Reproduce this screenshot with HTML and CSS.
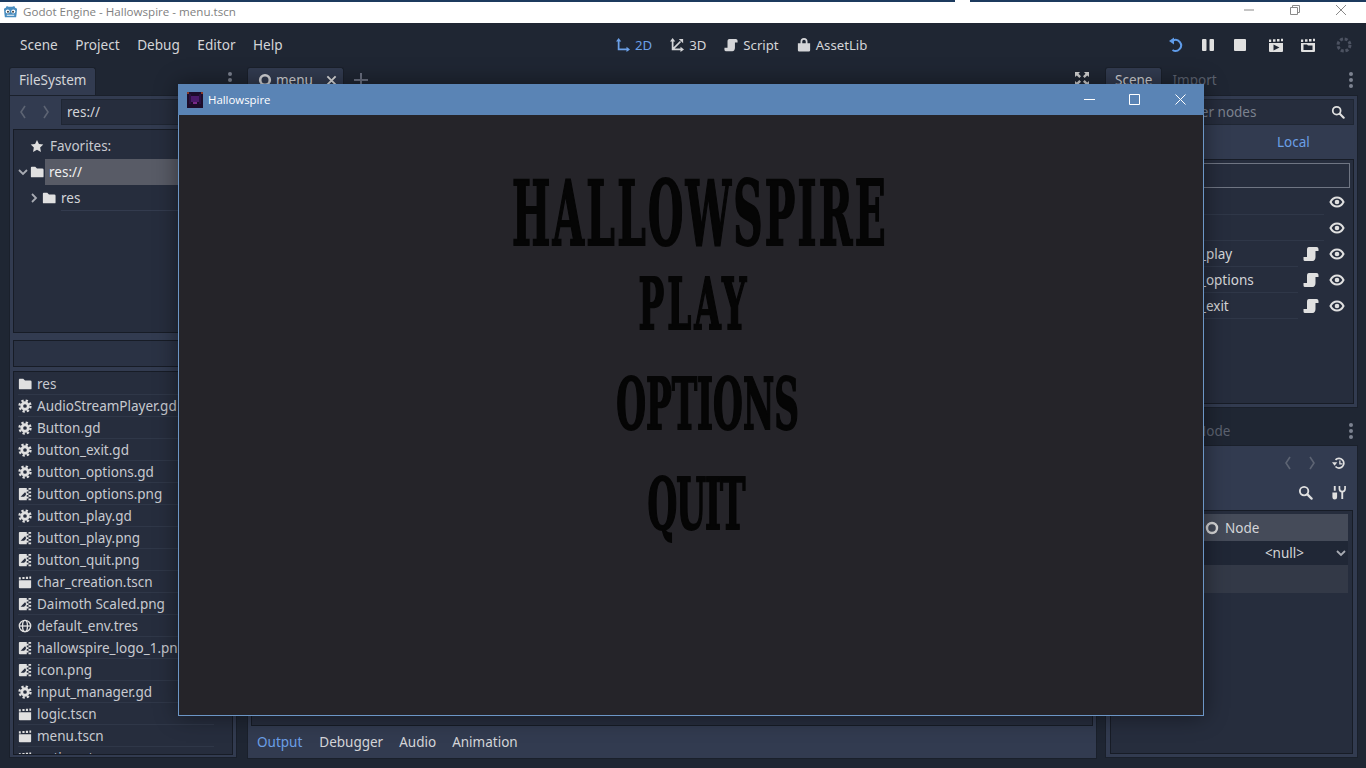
FILE: index.html
```html
<!DOCTYPE html>
<html lang="en">
  <head>
    <meta charset="UTF-8" />
    <title>Godot Engine - Hallowspire - menu.tscn</title>
    <link rel="stylesheet" href="styles.css">
  </head>
  <body>
    <svg class="defs" width="0" height="0">
      <symbol id="i-folder" viewBox="0 0 16 16"><path fill="currentColor" d="M2 2h4l2 2h6a1.500 1.500 0 0 1 1.500 1.500V13a1 1 0 0 1-1 1H2a1 1 0 0 1-1-1V3a1 1 0 0 1 1-1z"/></symbol>
      <symbol id="i-gear" viewBox="0 0 16 16"><circle cx="8" cy="8" r="3.700" fill="none" stroke="currentColor" stroke-width="3.200"/><circle cx="8" cy="8" r="6.300" fill="none" stroke="currentColor" stroke-width="2.600" stroke-dasharray="2.600 2.347"/></symbol>
      <symbol id="i-image" viewBox="0 0 16 16"><path fill="currentColor" d="M2 1h8v2h2v2h-2v2h2v2h-2v2h2v2h-2v2H2a1 1 0 0 1-1-1V2a1 1 0 0 1 1-1z"/><path fill="#262d3d" d="M3 11l5-5 1 1v2l-2 2z"/><path fill="currentColor" d="M12 1h3v2h-3zM12 5h3v2h-3zM12 9h3v2h-3zM12 13h3v2h-3z"/></symbol>
      <symbol id="i-scene" viewBox="0 0 16 16"><path fill="currentColor" d="M1 6h14v8a1 1 0 0 1-1 1H2a1 1 0 0 1-1-1z"/><path fill="currentColor" d="M1 2.500h2.200V5H1zM5 2.200h2.500v2.500H5zM9 2h2.500v2.500H9zM13 1.700h2v2.500h-2z"/></symbol>
      <symbol id="i-play-scene" viewBox="0 0 16 16"><use href="#i-scene"/><path fill="#1f2633" d="M5.500 7.500l6 3-6 3z"/></symbol>
      <symbol id="i-open-scene" viewBox="0 0 16 16"><use href="#i-scene"/><path fill="#1f2633" d="M3.500 7.500h3.500l1 1h4.500v4.500h-9z"/></symbol>
      <symbol id="i-globe" viewBox="0 0 16 16"><g fill="none" stroke="currentColor" stroke-width="1.500"><circle cx="8" cy="8" r="6.500"/><ellipse cx="8" cy="8" rx="2.800" ry="6.500"/><path d="M1.500 8h13"/></g></symbol>
      <symbol id="i-eye" viewBox="0 0 16 16"><path fill="none" stroke="currentColor" stroke-width="2" d="M1.500 8c1.500-3 3.700-4.500 6.500-4.500s5 1.500 6.500 4.500c-1.500 3-3.700 4.500-6.500 4.500S3 11 1.500 8z"/><circle cx="8" cy="8" r="2.300" fill="currentColor"/></symbol>
      <symbol id="i-script" viewBox="0 0 16 16"><path fill="currentColor" d="M6 1h7.500a2 2 0 0 1 2 2v2h-3v6c0 2-1 4-3 4H2a1.500 1.500 0 0 1-1.500-1.500V11H4V4c0-2 .5-3 2-3z"/></symbol>
      <symbol id="i-search" viewBox="0 0 16 16"><circle cx="6.500" cy="6.500" r="4.500" fill="none" stroke="currentColor" stroke-width="2"/><path d="M10 10l4.500 4.500" stroke="currentColor" stroke-width="2.400" stroke-linecap="round"/></symbol>
    </svg>

    <div class="screen-strip"><span class="strip-left"></span><span class="strip-gap"></span><span class="strip-right"></span></div>
    <header class="os-title">
      <svg class="godot-logo" viewBox="0 0 16 16"><path fill="#478cbf" d="M1 5l2-1 1-2 2 1h4l2-1 1 2 2 1-.5 5.500L14 14H2l-.5-3.500z"/><circle cx="5" cy="8" r="2.200" fill="#fff"/><circle cx="11" cy="8" r="2.200" fill="#fff"/><circle cx="5.300" cy="8.300" r="1.100" fill="#414042"/><circle cx="10.700" cy="8.300" r="1.100" fill="#414042"/><path d="M4 12h8" stroke="#fff" stroke-width="1"/></svg>
      <span class="os-title-text">Godot Engine - Hallowspire - menu.tscn</span>
      <div class="os-controls">
        <svg viewBox="0 0 10 10"><path d="M0 5h10" stroke="#8a8a8a"/></svg>
        <svg viewBox="0 0 10 10"><path fill="none" stroke="#8a8a8a" d="M.5 2.500h7v7h-7zM2.500 2.500v-2h7v7h-2"/></svg>
        <svg viewBox="0 0 10 10"><path stroke="#8a8a8a" d="M0 0l10 10M10 0L0 10"/></svg>
      </div>
    </header>

    <nav class="menubar">
      <div class="menu-left">
        <span>Scene</span><span>Project</span><span>Debug</span><span>Editor</span><span>Help</span>
      </div>
      <div class="menu-center">
        <span class="mode active"><svg viewBox="0 0 16 16"><path fill="none" stroke="currentColor" stroke-width="2" d="M3 3v10h11"/><path fill="currentColor" d="M3 0l3 4H0zM16 13l-4 3v-6z"/></svg>2D</span>
        <span class="mode"><svg viewBox="0 0 16 16"><path fill="none" stroke="currentColor" stroke-width="2" d="M3 3v10h10M3 13l9-9"/><path fill="currentColor" d="M3 0l3 4H0zM16 13l-4 3v-6zM15 1v5l-5-5z"/></svg>3D</span>
        <span class="mode"><svg viewBox="0 0 16 16"><use href="#i-script"/></svg>Script</span>
        <span class="mode"><svg viewBox="0 0 16 16"><path fill="currentColor" d="M1 6h14v8a1.500 1.500 0 0 1-1.500 1.500h-11A1.500 1.500 0 0 1 1 14z"/><path fill="none" stroke="currentColor" stroke-width="2" d="M5 7V4a3 3 0 0 1 6 0v3"/></svg>AssetLib</span>
      </div>
      <div class="menu-right">
        <svg class="blue" viewBox="0 0 16 16"><path fill="none" stroke="currentColor" stroke-width="2" d="M5 3.500A5.500 5.500 0 1 1 4.500 13"/><path fill="currentColor" d="M6 .5v7L1 4z"/></svg>
        <svg viewBox="0 0 16 16"><rect x="2" y="2" width="4.500" height="12" rx="1" fill="currentColor"/><rect x="9.500" y="2" width="4.500" height="12" rx="1" fill="currentColor"/></svg>
        <svg viewBox="0 0 16 16"><rect x="2" y="2" width="12" height="12" rx="1" fill="currentColor"/></svg>
        <svg viewBox="0 0 16 16"><use href="#i-play-scene"/></svg>
        <svg viewBox="0 0 16 16"><use href="#i-open-scene"/></svg>
        <svg class="dim" viewBox="0 0 16 16"><circle cx="8" cy="8" r="6" fill="none" stroke="currentColor" stroke-width="3" stroke-dasharray="3 1.710"/></svg>
      </div>
    </nav>

    <main class="docks">
      <section class="col-left">
        <div class="tabbar">
          <span class="tab active">FileSystem</span>
          <span class="dots"><i></i><i></i><i></i></span>
        </div>
        <div class="panel fs-panel">
          <div class="fs-nav">
            <svg class="chev dim-chev" viewBox="0 0 8 16"><path d="M6 2L2 8l4 6" /></svg>
            <svg class="chev dim-chev" viewBox="0 0 8 16"><path d="M2 2l4 6-4 6" /></svg>
            <div class="input path-input">res://</div>
          </div>
          <div class="box fs-tree">
            <div class="tree-row fav"><svg class="ico" viewBox="0 0 16 16"><path fill="currentColor" d="M8 1l2.200 4.600 5 .7-3.600 3.500.9 5L8 12.400l-4.500 2.400.9-5L.8 6.300l5-.7z"/></svg>Favorites:</div>
            <div class="tree-row res-root"><svg class="arrow" viewBox="0 0 10 10"><path d="M1 3l4 4 4-4"/></svg><svg class="ico" viewBox="0 0 16 16"><use href="#i-folder"/></svg><span class="selected">res://</span></div>
            <div class="tree-row res-child"><svg class="arrow" viewBox="0 0 10 10"><path d="M3 1l4 4-4 4"/></svg><svg class="ico" viewBox="0 0 16 16"><use href="#i-folder"/></svg><span class="child-name">res</span></div>
          </div>
          <div class="box fs-filter"></div>
          <div class="box fs-files">
            <div class="file"><svg class="ico" viewBox="0 0 16 16"><use href="#i-folder"/></svg>res</div>
            <div class="file"><svg class="ico" viewBox="0 0 16 16"><use href="#i-gear"/></svg>AudioStreamPlayer.gd</div>
            <div class="file"><svg class="ico" viewBox="0 0 16 16"><use href="#i-gear"/></svg>Button.gd</div>
            <div class="file"><svg class="ico" viewBox="0 0 16 16"><use href="#i-gear"/></svg>button_exit.gd</div>
            <div class="file"><svg class="ico" viewBox="0 0 16 16"><use href="#i-gear"/></svg>button_options.gd</div>
            <div class="file"><svg class="ico" viewBox="0 0 16 16"><use href="#i-image"/></svg>button_options.png</div>
            <div class="file"><svg class="ico" viewBox="0 0 16 16"><use href="#i-gear"/></svg>button_play.gd</div>
            <div class="file"><svg class="ico" viewBox="0 0 16 16"><use href="#i-image"/></svg>button_play.png</div>
            <div class="file"><svg class="ico" viewBox="0 0 16 16"><use href="#i-image"/></svg>button_quit.png</div>
            <div class="file"><svg class="ico" viewBox="0 0 16 16"><use href="#i-scene"/></svg>char_creation.tscn</div>
            <div class="file"><svg class="ico" viewBox="0 0 16 16"><use href="#i-image"/></svg>Daimoth Scaled.png</div>
            <div class="file"><svg class="ico" viewBox="0 0 16 16"><use href="#i-globe"/></svg>default_env.tres</div>
            <div class="file"><svg class="ico" viewBox="0 0 16 16"><use href="#i-image"/></svg>hallowspire_logo_1.png</div>
            <div class="file"><svg class="ico" viewBox="0 0 16 16"><use href="#i-image"/></svg>icon.png</div>
            <div class="file"><svg class="ico" viewBox="0 0 16 16"><use href="#i-gear"/></svg>input_manager.gd</div>
            <div class="file"><svg class="ico" viewBox="0 0 16 16"><use href="#i-scene"/></svg>logic.tscn</div>
            <div class="file"><svg class="ico" viewBox="0 0 16 16"><use href="#i-scene"/></svg>menu.tscn</div>
            <div class="file"><svg class="ico" viewBox="0 0 16 16"><use href="#i-scene"/></svg>options.tscn</div>
          </div>
        </div>
      </section>

      <section class="col-center">
        <div class="tabbar">
          <span class="tab active scene-tab">
            <svg viewBox="0 0 16 16"><circle cx="8" cy="8" r="5.500" fill="none" stroke="currentColor" stroke-width="3"/></svg>
            menu
            <svg class="tab-close" viewBox="0 0 12 12"><path d="M1.500 1.500l9 9M10.500 1.500l-9 9"/></svg>
          </span>
          <svg class="tab-add" viewBox="0 0 14 14"><path d="M7 0v14M0 7h14"/></svg>
          <svg class="fullscreen" viewBox="0 0 16 16"><path fill="currentColor" d="M1 1h5L4.500 2.800 7 5.300 5.300 7 2.800 4.500 1 6zM15 1v5l-1.800-1.500L10.700 7 9 5.300l2.500-2.500L10 1zM1 15v-5l1.800 1.500L5.300 9 7 10.700l-2.500 2.500L6 15zM15 15h-5l1.500-1.800L9 10.700 10.700 9l2.500 2.500L15 10z"/></svg>
        </div>
        <div class="panel center-panel">
          <div class="box viewport"></div>
          <div class="bottom-tabs">
            <span class="active">Output</span><span>Debugger</span><span>Audio</span><span>Animation</span>
          </div>
        </div>
      </section>

      <section class="col-right">
        <div class="tabbar">
          <span class="tab active">Scene</span>
          <span class="tab muted">Import</span>
          <span class="dots"><i></i><i></i><i></i></span>
        </div>
        <div class="panel scene-panel">
          <div class="input scene-filter">Filter nodes<svg class="ico" viewBox="0 0 16 16"><use href="#i-search"/></svg></div>
          <div class="scene-mode"><span class="local">Local</span></div>
          <div class="box scene-tree">
            <div class="node node-root"></div>
            <div class="node wide"><span class="node-name"></span><svg class="ico" viewBox="0 0 16 16"><use href="#i-eye"/></svg></div>
            <div class="node wide"><span class="node-name"></span><svg class="ico" viewBox="0 0 16 16"><use href="#i-eye"/></svg></div>
            <div class="node"><span class="node-name">button_play</span><svg class="ico" viewBox="0 0 16 16"><use href="#i-script"/></svg><svg class="ico" viewBox="0 0 16 16"><use href="#i-eye"/></svg></div>
            <div class="node"><span class="node-name">button_options</span><svg class="ico" viewBox="0 0 16 16"><use href="#i-script"/></svg><svg class="ico" viewBox="0 0 16 16"><use href="#i-eye"/></svg></div>
            <div class="node"><span class="node-name">button_exit</span><svg class="ico" viewBox="0 0 16 16"><use href="#i-script"/></svg><svg class="ico" viewBox="0 0 16 16"><use href="#i-eye"/></svg></div>
          </div>
        </div>
        <div class="tabbar node-tabs">
          <span class="tab muted">Node</span>
          <span class="dots"><i></i><i></i><i></i></span>
        </div>
        <div class="panel node-panel">
          <div class="insp-row">
            <svg class="chev dim-chev" viewBox="0 0 8 16"><path d="M6 2L2 8l4 6" /></svg>
            <svg class="chev dim-chev" viewBox="0 0 8 16"><path d="M2 2l4 6-4 6" /></svg>
            <svg class="ico" viewBox="0 0 16 16"><path fill="none" stroke="currentColor" stroke-width="2" d="M4 4.500A5.500 5.500 0 1 1 4 12"/><path fill="currentColor" d="M0 7h6L3 11z"/><path fill="none" stroke="currentColor" stroke-width="1.500" d="M9 5v4h3"/></svg>
          </div>
          <div class="insp-row second">
            <svg class="ico" viewBox="0 0 16 16"><use href="#i-search"/></svg>
            <svg class="ico" viewBox="0 0 16 16"><path fill="currentColor" d="M3 1h2v5H3zM1.500 8h5v5a2.500 2.500 0 0 1-5 0zM11 7h2v8h-2z"/><path fill="none" stroke="currentColor" stroke-width="1.800" d="M9 1v3a3 3 0 0 0 6 0V1"/></svg>
          </div>
          <div class="box insp-box">
            <div class="insp-node"><svg class="ring" viewBox="0 0 14 14"><circle cx="7" cy="7" r="5" fill="none" stroke="currentColor" stroke-width="2.400"/></svg>Node</div>
            <div class="insp-prop"><span>&lt;null&gt;</span><svg class="arrow" viewBox="0 0 10 10"><path d="M1 3l4 4 4-4"/></svg></div>
            <div class="insp-section"></div>
          </div>
        </div>
      </section>
    </main>

    <!-- running game window floats over the editor -->
    <div class="game-window">
      <div class="game-title">
        <svg class="game-icon" viewBox="0 0 8 8" shape-rendering="crispEdges"><rect width="8" height="8" fill="#1c0c2a"/><path fill="#4a1a6a" d="M2 2h4v3H2z"/><path fill="#7a2a8a" d="M3 5h2v1H3z"/><path fill="#8a3a2a" d="M0 0h1v1H0zM7 0h1v1H7z"/><path fill="#2a1040" d="M1 1h1v5H1zM6 1h1v5H6z"/></svg>
        <span class="game-name">Hallowspire</span>
        <div class="game-controls">
          <svg viewBox="0 0 11 11"><path d="M0 5.500h11" stroke="#fff"/></svg>
          <svg viewBox="0 0 11 11"><path d="M.5.500h10v10H.500z" fill="none" stroke="#fff"/></svg>
          <svg class="game-close" viewBox="0 0 11 11"><path d="M.5.500l10 10M10.500.500l-10 10" stroke="#fff"/></svg>
        </div>
      </div>
      <div class="game-body">
        <div class="logo-text">HALLOWSPIRE</div>
        <div class="btn-text btn-play">PLAY</div>
        <div class="btn-text btn-options">OPTIONS</div>
        <div class="btn-text btn-quit">QUIT</div>
      </div>
    </div>
  </body>
</html>
```

FILE: styles.css
```css
html,
body {
  margin: 0;
  height: 100%;
}
body {
  width: 1366px;
  height: 768px;
  overflow: hidden;
  background: #1f2633;
  font-family: "Noto Sans", sans-serif;
  font-size: 13.5px;
  color: #d4d5d8;
  position: relative;
}
.defs {
  position: absolute;
}
svg {
  display: block;
  flex: none;
}

/* os title */
.screen-strip {
  height: 2px;
  display: flex;
}
.strip-left {
  width: 955px;
  background: #1c3a5e;
}
.strip-gap {
  width: 15px;
  background: #fff;
}
.strip-right {
  flex: 1;
  background: #1c3a5e;
}
.os-title {
  height: 21px;
  background: #fff;
  display: flex;
  align-items: center;
  padding-left: 3px;
}
.godot-logo {
  width: 15px;
  height: 15px;
  margin-top: -2px;
}
.os-title-text {
  margin-left: 5px;
  margin-top: -2px;
  font-family: "Open Sans", sans-serif;
  font-size: 11.6px;
  color: #7f7f7f;
}
.os-controls {
  margin-left: auto;
  display: flex;
  gap: 36px;
  padding-right: 20px;
  margin-top: -5px;
}
.os-controls svg {
  width: 10px;
  height: 10px;
}

/* menu */
.menubar {
  height: 44px;
  display: flex;
  align-items: center;
  position: relative;
  padding-bottom: 1px;
  box-sizing: border-box;
}
.menu-left {
  display: flex;
  gap: 17.5px;
  padding-left: 20px;
  font-size: 13.6px;
}
.menu-center {
  position: absolute;
  left: 616px;
  display: flex;
  gap: 18px;
  font-size: 13.2px;
}
.mode {
  display: flex;
  align-items: center;
  gap: 5px;
}
.mode svg {
  width: 14px;
  height: 14px;
}
.mode.active {
  color: #6b9fe6;
}
.menu-right {
  margin-left: auto;
  display: flex;
  align-items: center;
  padding-right: 14px;
  gap: 16px;
  color: #e0e0e0;
}
.menu-right svg {
  width: 16px;
  height: 16px;
}
.menu-right svg:nth-child(4) {
  margin-left: 4px;
}
.menu-right svg:nth-child(6) {
  margin-left: 4px;
}
.menu-right .blue {
  color: #5f9be8;
}
.menu-right .dim {
  color: #4c5261;
}

/* docks */
.docks {
  display: flex;
  height: 701px;
  padding-left: 9px;
}
.col-left {
  width: 228px;
}
.col-center {
  width: 850px;
  margin-left: 10px;
}
.col-right {
  width: 253px;
  margin-left: 8px;
}
.tabbar {
  height: 28px;
  display: flex;
  align-items: stretch;
  position: relative;
}
.tab {
  padding: 0 9px 3px;
  display: flex;
  align-items: center;
  border-radius: 3px 3px 0 0;
}
.tab.active {
  background: #323b50;
  border: 1px solid #1a202b;
  border-bottom: 0;
}
.tab.muted {
  color: #5c6270;
  padding: 0 0 3px 9px;
}
.col-right .tab.muted {
  margin-left: 10px;
  padding: 0 0 3px;
}
.dots {
  margin-left: auto;
  margin-right: 5px;
  display: flex;
  flex-direction: column;
  justify-content: center;
  gap: 2px;
  padding-bottom: 2px;
}
.dots i {
  width: 4px;
  height: 4px;
  border-radius: 50%;
  background: #7c8290;
}
.panel {
  background: #323b50;
  border: 1px solid #1a202b;
  box-sizing: border-box;
}
.box {
  background: #262d3d;
  border: 1px solid #171c26;
  box-sizing: border-box;
}
.input {
  background: #262d3d;
  border: 1px solid #1f2633;
  box-sizing: border-box;
  height: 26px;
  display: flex;
  align-items: center;
}
.ico {
  width: 14px;
  height: 14px;
  color: #e0e0e0;
}
.chev {
  width: 8px;
  height: 16px;
  fill: none;
  stroke: #5d6473;
  stroke-width: 1.600;
}
.arrow {
  width: 10px;
  height: 10px;
  fill: none;
  stroke: #a8abb3;
  stroke-width: 1.800;
}

/* filesystem */
.fs-panel {
  height: 663px;
  padding: 3px;
}
.fs-nav {
  display: flex;
  align-items: center;
  gap: 15px;
  padding-left: 6px;
}
.path-input {
  flex: 1;
  margin-left: -4px;
  padding-left: 5px;
}
.fs-tree {
  height: 204px;
  margin-top: 4px;
  padding: 3px 0 0 0;
}
.tree-row {
  height: 26px;
  display: flex;
  align-items: center;
  position: relative;
}
.fav {
  padding-left: 16px;
  gap: 6px;
  color: #c8cad0;
}
.res-root {
  padding-left: 4px;
  gap: 2px;
}
.selected {
  flex: 1;
  background: #585b66;
  height: 26px;
  line-height: 27px;
  margin-left: -1px;
  padding-left: 4px;
  color: #f0f0f0;
}
.res-child {
  padding-left: 15px;
  gap: 3px;
}
.child-name {
  flex: 1;
  margin-left: 2px;
  border-bottom: 1px solid #333b4e;
  line-height: 27px;
  height: 25px;
}
.fs-filter {
  height: 27px;
  margin-top: 7px;
  background: #2a3244;
}
.fs-files {
  height: 384px;
  margin-top: 4px;
  padding: 1px 0 0 4px;
  overflow: hidden;
}
.file {
  width: 196px;
  height: 22px;
  display: flex;
  align-items: center;
  gap: 5px;
  border-bottom: 1px solid #2f3748;
  box-sizing: border-box;
  white-space: nowrap;
  color: #c8cad0;
}

/* center */
.scene-tab {
  padding: 0 6px 3px 10px;
  gap: 4px;
  width: 97px;
  box-sizing: border-box;
}
.scene-tab svg {
  width: 14px;
  height: 14px;
}
.scene-tab .tab-close {
  width: 11px;
  height: 11px;
  margin-left: auto;
  stroke: #e0e0e0;
  stroke-width: 2;
}
.tab-add {
  width: 14px;
  height: 14px;
  margin: 6px 0 0 10px;
  stroke: #6a7080;
  stroke-width: 2;
}
.fullscreen {
  width: 16px;
  height: 16px;
  margin: 4px 7px 0 auto;
  color: #d0d0d0;
}
.center-panel {
  height: 664px;
  padding: 0 3px;
}
.viewport {
  height: 630px;
}
.bottom-tabs {
  display: flex;
  gap: 16px;
  height: 33px;
  align-items: center;
  padding: 0 0 2px 6px;
  box-sizing: border-box;
}
.bottom-tabs .active {
  color: #6b9fe6;
  margin-right: 1px;
}

/* scene dock */
.scene-panel {
  height: 313px;
  padding: 3px;
}
.scene-filter {
  justify-content: space-between;
  padding: 0 8px 0 72px;
  color: #7c828f;
}
.scene-mode {
  height: 34px;
  display: flex;
  align-items: center;
  padding-left: 168px;
}
.local {
  color: #6b9fe6;
}
.scene-tree {
  height: 245px;
  padding: 3px 0 0 3px;
  overflow: hidden;
}
.node {
  height: 26px;
  display: flex;
  align-items: center;
  justify-content: flex-end;
  gap: 8px;
  padding-right: 8px;
  box-sizing: border-box;
}
.node .ico:last-child {
  margin-left: 2px;
}
.node.wide .ico:last-child {
  margin-left: 0;
}
.node-root {
  height: 25px;
  border: 1px solid #6f7583;
  margin-right: 3px;
  margin-bottom: 1px;
}
.node .ico {
  width: 16px;
  height: 16px;
}
.node-name {
  flex: none;
  margin-right: -3px;
  margin-left: 46px;
  width: 141px;
  height: 26px;
  line-height: 27px;
  border-bottom: 1px solid #2f3748;
  box-sizing: border-box;
}
.node.wide .node-name {
  width: 165px;
}
.node-tabs {
  margin-top: 10px;
  height: 27px;
}
.node-tabs .tab.muted {
  margin-left: 91px;
  padding-bottom: 1px;
}
.node-panel {
  height: 313px;
  padding: 2px 4px 3px;
}
.insp-row {
  height: 29px;
  display: flex;
  align-items: center;
  justify-content: flex-end;
  gap: 16px;
  padding-right: 7px;
}
.insp-row.second {
  height: 30px;
  gap: 18px;
}
.insp-row.second .ico {
  width: 15px;
  height: 15px;
}
.insp-box {
  height: 244px;
  margin-top: 3px;
  padding: 3px 4px 0 3px;
}
.insp-node {
  height: 27px;
  background: #454b59;
  display: flex;
  align-items: center;
  padding-left: 91px;
  gap: 6px;
}
.ring {
  width: 14px;
  height: 14px;
  color: #d8d8d8;
}
.insp-prop {
  height: 24px;
  display: flex;
  align-items: center;
  justify-content: flex-end;
  gap: 32px;
  padding-right: 2px;
  background: #202736;
}
.insp-section {
  height: 28px;
  background: #333947;
}

/* game window */
.game-window {
  position: absolute;
  left: 178px;
  top: 84px;
  width: 1026px;
  height: 632px;
  border: 1px solid #6c96c6;
  border-top: 0;
  box-sizing: border-box;
  background: #252429;
  box-shadow: 0 0 22px rgba(0, 0, 0, 0.45);
}
.game-title {
  height: 31px;
  margin: 0 -1px;
  background: #5a84b5;
  display: flex;
  align-items: center;
  padding-left: 9px;
  color: #fff;
  font-family: "Open Sans", sans-serif;
  font-size: 11.4px;
}
.game-icon {
  width: 16px;
  height: 16px;
}
.game-name {
  margin-left: 5px;
}
.game-controls {
  margin-left: auto;
  display: flex;
  gap: 34px;
  padding-right: 18px;
}
.game-controls svg {
  width: 11px;
  height: 11px;
}
.game-controls .game-close {
  margin-left: 1px;
}
.game-body {
  font-family: "DejaVu Serif", serif;
  font-weight: 700;
  font-stretch: condensed;
  color: #050505;
  white-space: nowrap;
  padding-top: 64px;
  -webkit-text-stroke: 1px #050505;
}
.logo-text,
.btn-text {
  display: flex;
  justify-content: center;
  align-items: center;
}
.logo-text {
  width: 372px;
  height: 70px;
  margin-left: 335px;
  font-size: 46px;
  letter-spacing: 2.300px;
  transform: scale(0.98, 1.95);
}
.btn-text {
  height: 57px;
  font-size: 38px;
  transform: scale(1, 1.85);
}
.btn-play {
  width: 110px;
  margin: 27px 0 0 460px;
  letter-spacing: 3px;
}
.btn-options {
  width: 179px;
  margin: 43px 0 0 439px;
}
.btn-quit {
  width: 96px;
  margin: 43px 0 0 469px;
  letter-spacing: -1px;
}
```
